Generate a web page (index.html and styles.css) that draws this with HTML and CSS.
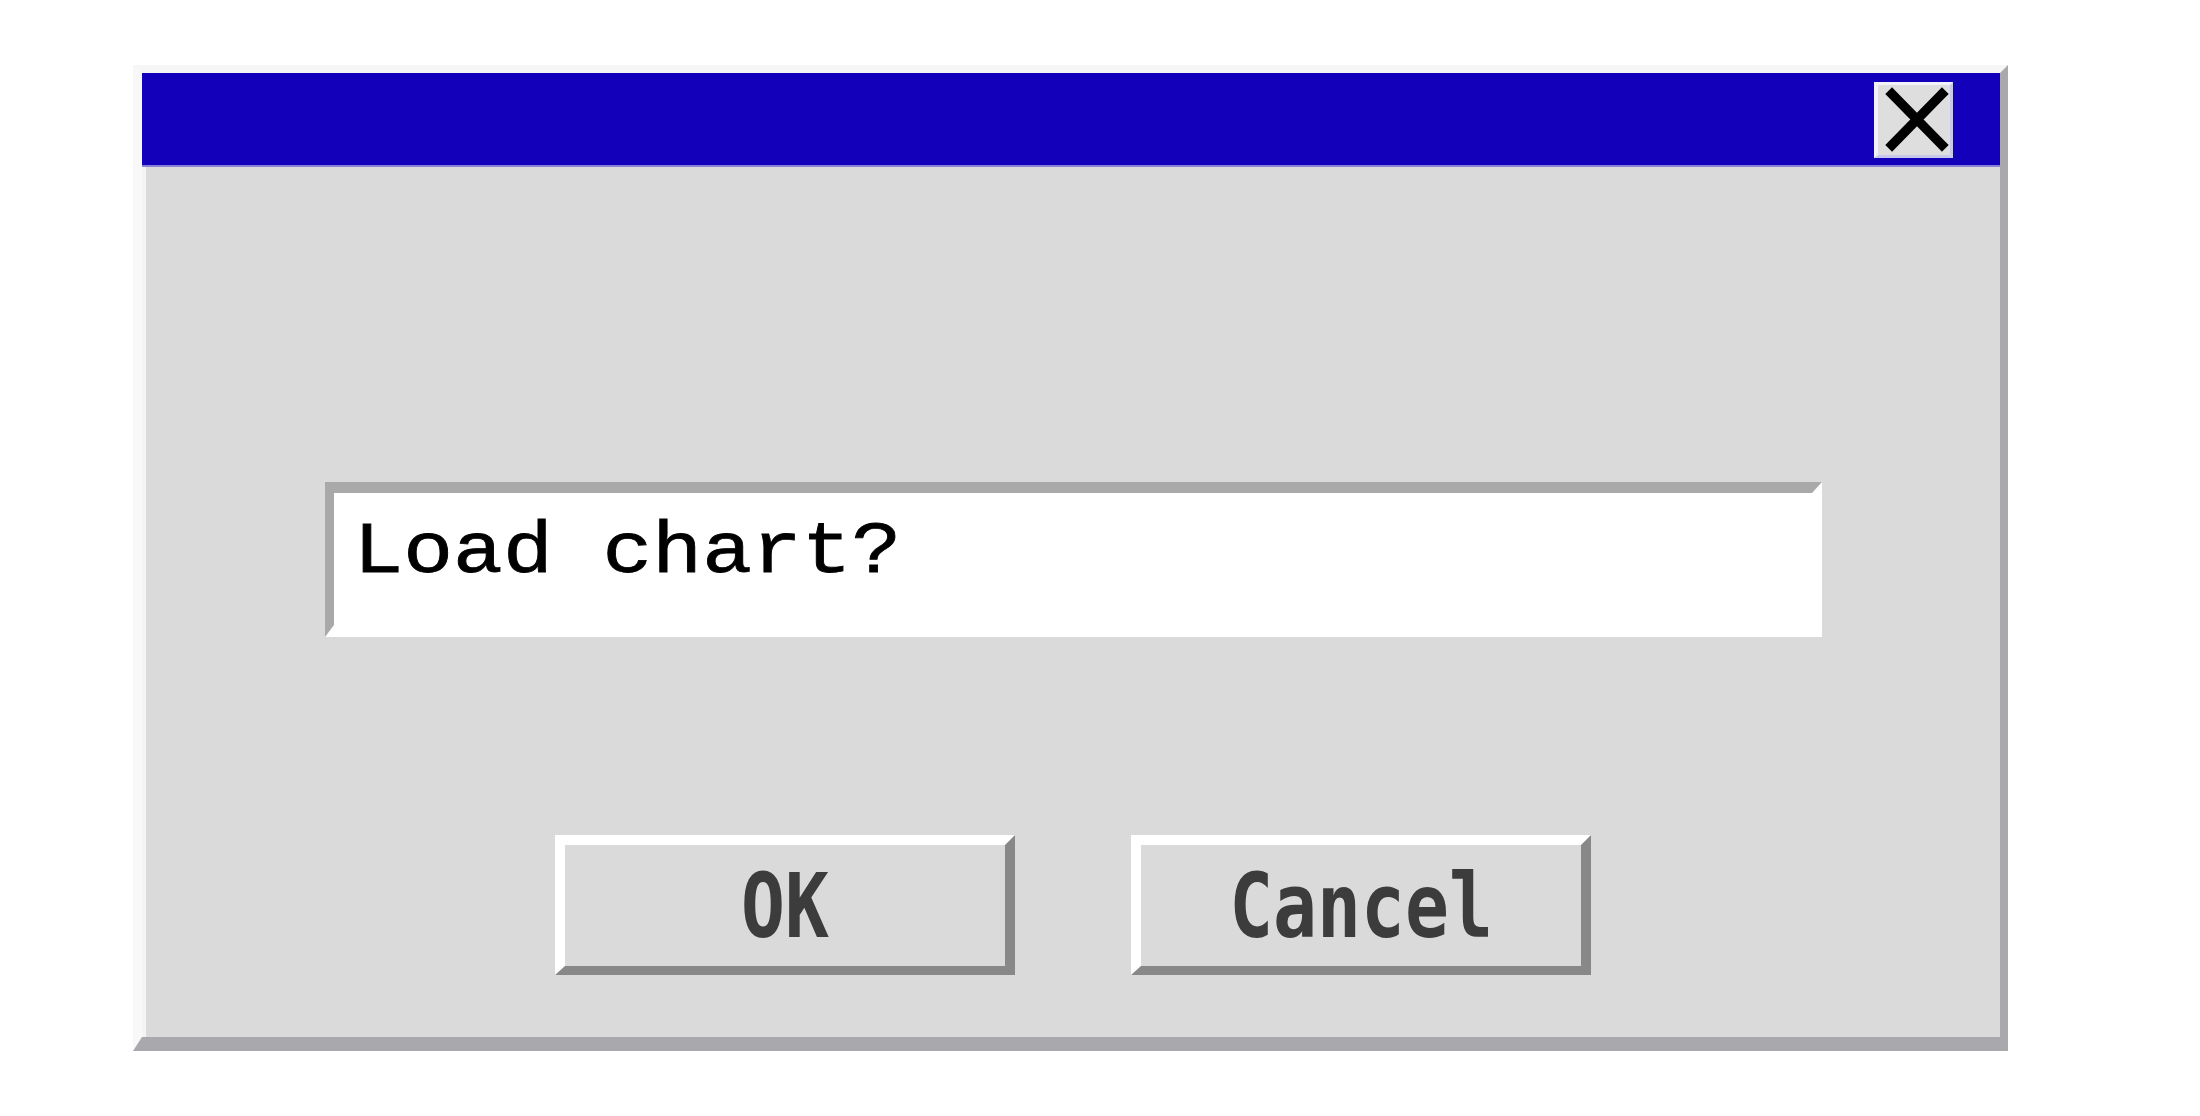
FILE: index.html
```html
<!DOCTYPE html>
<html>
<head>
<meta charset="utf-8">
<link rel="stylesheet" href="styles.css">
</head>
<body>
<div class="window">
  <div class="titlebar">
    <div class="close">
      <svg viewBox="0 0 71 70" width="71" height="70"><path d="M13 9 L63 60 M63 9 L13 60" stroke="#000" stroke-width="9.5" stroke-linecap="square" fill="none"/></svg>
    </div>
  </div>
  <div class="content">
    <div class="field"><span class="prompt">Load chart?</span></div>
    <div class="buttons">
      <div class="btn"><span class="label">OK</span></div>
      <div class="btn"><span class="label">Cancel</span></div>
    </div>
  </div>
</div>
</body>
</html>
```
FILE: styles.css
```css
html, body {
  margin: 0;
  padding: 0;
  background: #ffffff;
}
body {
  width: 2200px;
  height: 1116px;
  overflow: hidden;
}
.window {
  margin-left: 133px;
  margin-top: 65px;
  width: 1858px;
  border-top: 8px solid #f6f6f6;
  border-left: 9px solid #f8f8f8;
  border-right: 8px solid #a9a8ac;
  border-bottom: 14px solid #a9a8ac;
}
.titlebar {
  height: 94px;
  background: #1300bb;
  border-bottom: 2px solid #8a80d8;
  display: flex;
  justify-content: flex-end;
  align-items: flex-start;
  padding-top: 9px;
  padding-right: 47px;
  box-sizing: border-box;
}
.close {
  width: 79px;
  height: 76px;
  box-sizing: border-box;
  background: #dedede;
  border-top: 3px solid #f2f2fa;
  border-left: 4px solid #f2f2fa;
  border-right: 3px solid #c8c8ec;
  border-bottom: 3px solid #c8c8ec;
  display: flex;
  align-items: center;
  justify-content: center;
}
.close svg {
  display: block;
}
.content {
  height: 870px;
  box-sizing: border-box;
  background: #dadada;
  border-left: 4px solid #f4f4f4;
  padding-top: 315px;
  display: flex;
  flex-direction: column;
  align-items: center;
  gap: 198px;
}
.field {
  width: 1497px;
  height: 155px;
  box-sizing: border-box;
  background: #ffffff;
  border-top: 11px solid #a9a9a9;
  border-left: 9px solid #a9a9a9;
  border-right: 10px solid #ffffff;
  border-bottom: 12px solid #ffffff;
  padding-left: 20px;
  padding-top: 10px;
}
.prompt {
  display: inline-block;
  font-family: "Liberation Mono", "Courier New", monospace;
  font-size: 83px;
  line-height: 94px;
  color: #000000;
  white-space: pre;
  -webkit-text-stroke: 0.9px #000000;
  transform: scaleY(0.86);
  transform-origin: 0 69px;
}
.buttons {
  display: flex;
  gap: 116px;
}
.btn {
  width: 460px;
  height: 140px;
  box-sizing: border-box;
  background: #dadada;
  border-top: 10px solid #ffffff;
  border-left: 10px solid #ffffff;
  border-right: 10px solid #888888;
  border-bottom: 9px solid #888888;
  display: flex;
  align-items: center;
  justify-content: center;
}
.label {
  display: inline-block;
  font-family: "DejaVu Sans Mono", monospace;
  font-weight: bold;
  font-size: 73px;
  line-height: 80px;
  color: #3c3c3c;
  transform: scaleY(1.23);
}
```
